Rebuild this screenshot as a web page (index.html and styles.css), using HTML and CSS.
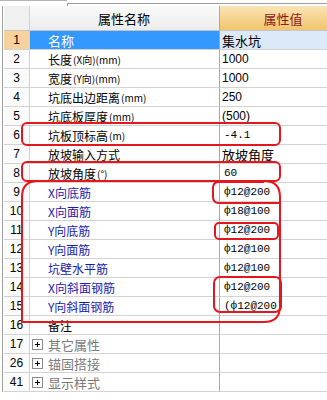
FILE: index.html
```html
<!DOCTYPE html>
<html lang="zh">
<head>
    <meta charset="UTF-8">
    <title>属性编辑器</title>
    <link rel="stylesheet" href="styles.css">
</head>
<body>
    <div class="topbar">
        <div class="tab-left"></div>
        <div class="tab-right"></div>
    </div>

    <div class="sheet">
        <div class="grid">
            <div class="hd num"></div>
            <div class="hd name">属性名称</div>
            <div class="hd value">属性值</div>

            <div class="num sel">1</div>
            <div class="name sel">名称</div>
            <div class="value sel cjk">集水坑</div>

            <div class="num">2</div>
            <div class="name">长度<span class="unit">(X向)(mm)</span></div>
            <div class="value">1000</div>

            <div class="num">3</div>
            <div class="name">宽度<span class="unit">(Y向)(mm)</span></div>
            <div class="value">1000</div>

            <div class="num">4</div>
            <div class="name">坑底出边距离<span class="unit">(mm)</span></div>
            <div class="value">250</div>

            <div class="num">5</div>
            <div class="name">坑底板厚度<span class="unit">(mm)</span></div>
            <div class="value">(500)</div>

            <div class="num">6</div>
            <div class="name">坑板顶标高<span class="unit">(m)</span></div>
            <div class="value mono">-4.1</div>

            <div class="num">7</div>
            <div class="name">放坡输入方式</div>
            <div class="value cjk">放坡角度</div>

            <div class="num">8</div>
            <div class="name">放坡角度<span class="unit">(°)</span></div>
            <div class="value mono">60</div>

            <div class="num">9</div>
            <div class="name blue">X向底筋</div>
            <div class="value mono">ф12@200</div>

            <div class="num">10</div>
            <div class="name blue">X向面筋</div>
            <div class="value mono">ф18@100</div>

            <div class="num">11</div>
            <div class="name blue">Y向底筋</div>
            <div class="value mono">ф12@200</div>

            <div class="num">12</div>
            <div class="name blue">Y向面筋</div>
            <div class="value mono">ф12@100</div>

            <div class="num">13</div>
            <div class="name blue">坑壁水平筋</div>
            <div class="value mono">ф12@100</div>

            <div class="num">14</div>
            <div class="name blue">X向斜面钢筋</div>
            <div class="value mono">ф12@200</div>

            <div class="num">15</div>
            <div class="name blue">Y向斜面钢筋</div>
            <div class="value mono">(ф12@200)</div>

            <div class="num">16</div>
            <div class="name">备注</div>
            <div class="value"></div>

            <div class="num">17</div>
            <div class="name group"><span class="plus"></span>其它属性</div>
            <div class="value"></div>

            <div class="num">26</div>
            <div class="name group"><span class="plus"></span>锚固搭接</div>
            <div class="value"></div>

            <div class="num">41</div>
            <div class="name group"><span class="plus"></span>显示样式</div>
            <div class="value"></div>
        </div>
    </div>

    <!-- red hand-drawn marks over the grid -->
    <svg class="marks" width="327" height="400" viewBox="0 0 327 400">
        <rect x="22" y="123" width="258" height="22" rx="5"/>
        <rect x="22" y="162" width="258" height="19" rx="5"/>
        <path d="M22 322 V197 Q22 181 38 181 H264 Q280 181 280 197 V306 Q280 322 264 322 Z"/>
        <path d="M280 203 H219 Q213 203 213 197 V188 Q213 182 219 182 H264"/>
        <rect x="215" y="223" width="63" height="16" rx="4"/>
        <rect x="214" y="277" width="67" height="35" rx="6"/>
    </svg>
</body>
</html>
```

FILE: styles.css
```css
*{
    box-sizing: border-box;
}
body{
    margin: 0;
    width: 327px;
    height: 400px;
    overflow: hidden;
    background-color: #ffffff;
    font-family: "Noto Sans CJK SC", "Liberation Sans", sans-serif;
    font-size: 12px;
    color: #000000;
    position: relative;
}
.topbar{
    display: flex;
    height: 6px;
}
.tab-left{
    width: 67px;
    border-top: 1px solid #b4b4b4;
}
.tab-right{
    flex: 1;
    margin-top: 3px;
    border-top: 1px solid #9c9c9c;
    border-left: 1px solid #9c9c9c;
}
.sheet{
    margin-left: 2px;
    width: 325px;
    border-left: 1px solid #a0a0a0;
    padding-left: 1px;
}
.grid{
    display: grid;
    grid-template-columns: 26px 190px 107px;
    grid-template-rows: 25px;
    grid-auto-rows: 19px;
}
.grid > div{
    border-bottom: 1px solid #d2d2d2;
    border-right: 1px solid #d2d2d2;
    display: flex;
    align-items: center;
    white-space: nowrap;
    overflow: hidden;
}
.grid > .value{
    border-right: none;
}
.num{
    justify-content: center;
    font-family: "Liberation Sans", sans-serif;
    font-size: 12px;
    background-color: #fbfbfb;
    border-right-color: #c9d3df !important;
}
.name{
    padding-left: 18px;
    border-right-color: #a8a8a8 !important;
}
.value{
    padding-left: 2px;
    font-family: "Liberation Sans", sans-serif;
    font-size: 12px;
}
.value.cjk{
    font-family: "Noto Sans CJK SC", sans-serif;
    font-size: 13px;
}
.value.mono{
    font-family: "Liberation Mono", monospace;
    font-size: 11px;
    padding-left: 4px;
}
.unit{
    font-size: 10px;
    margin-left: 1px;
}
.hd{
    justify-content: center;
    font-size: 13px;
    padding-left: 0;
    border-bottom-color: #c4c4c4 !important;
}
.hd.num{
    background: #f0f0f0;
}
.hd.name{
    background: linear-gradient(#fafafa, #ececec);
    padding-left: 0;
    padding-right: 1px;
}
.hd.value{
    background: linear-gradient(#fbe4b4, #f2c46e);
    color: #8a1a1a;
    font-family: "Noto Sans CJK SC", sans-serif;
    font-size: 13px;
    padding-left: 19px;
}
.num.sel{
    background-color: #f8d29c;
}
.name.sel{
    background-color: #3399ff;
    color: #ffffff;
    font-size: 13px;
}
.value.sel{
    background-color: #dce9f8;
}
.blue{
    color: #1a1aaa;
}
.group{
    padding-left: 2px;
    color: #7a7a7a;
    font-size: 13px;
}
.plus{
    position: relative;
    width: 11px;
    height: 11px;
    border: 1px solid #8c8c8c;
    background: #ffffff;
    margin-right: 5px;
    flex: none;
}
.plus::before, .plus::after{
    content: "";
    position: absolute;
    background: #000000;
}
.plus::before{
    left: 2px;
    top: 4px;
    width: 5px;
    height: 1px;
}
.plus::after{
    left: 4px;
    top: 2px;
    width: 1px;
    height: 5px;
}
.marks{
    position: absolute;
    left: 0;
    top: 0;
    pointer-events: none;
}
.marks rect, .marks path{
    fill: none;
    stroke: #e4161e;
    stroke-width: 2;
}
```
